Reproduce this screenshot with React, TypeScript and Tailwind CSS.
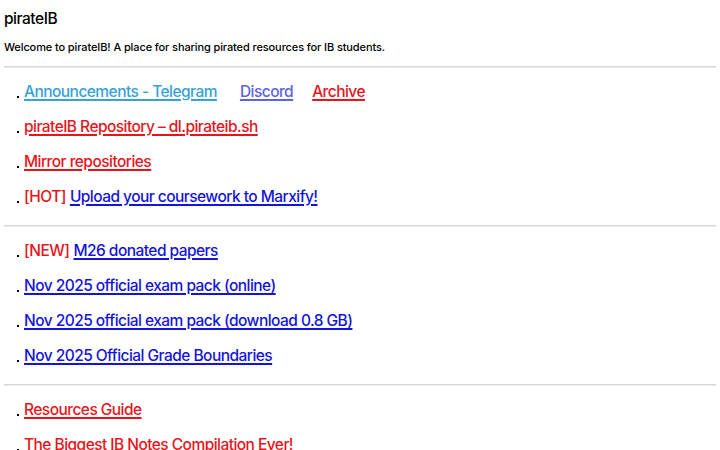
import React from 'react';

type Part = { text: string; href?: string; color: string };

const red = 'text-[#e8141b]';
const blue = 'text-[#1414dc]';

const groups: Part[][][] = [
    [
        [
            { text: 'Announcements - Telegram', href: '#', color: 'text-[#35a2d8]' },
            { text: 'Discord', href: '#', color: 'text-[#5d63e2] ml-[23px]' },
            { text: 'Archive', href: '#', color: `${red} ml-[19px]` },
        ],
        [{ text: 'pirateIB Repository – dl.pirateib.sh', href: '#', color: red }],
        [{ text: 'Mirror repositories', href: '#', color: red }],
        [
            { text: '[HOT]', color: red },
            { text: 'Upload your coursework to Marxify!', href: '#', color: blue },
        ],
    ],
    [
        [
            { text: '[NEW]', color: red },
            { text: 'M26 donated papers', href: '#', color: blue },
        ],
        [{ text: 'Nov 2025 official exam pack (online)', href: '#', color: blue }],
        [{ text: 'Nov 2025 official exam pack (download 0.8 GB)', href: '#', color: blue }],
        [{ text: 'Nov 2025 Official Grade Boundaries', href: '#', color: blue }],
    ],
    [
        [{ text: 'Resources Guide', href: '#', color: red }],
        [{ text: 'The Biggest IB Notes Compilation Ever!', href: '#', color: red }],
    ],
];

const Rule = () => <hr className="border-0 h-[2px] bg-[#d6d6d6] border-b border-b-[#ececec]" />;

export default function App() {
    return (
        <div className="min-h-screen bg-white px-1 text-black font-['Inter','Liberation_Sans',sans-serif]">
            <h1 className="pt-[9px] text-[15.5px] leading-[20px] font-medium tracking-[-0.03em]">pirateIB</h1>
            <p className="mt-[11px] text-[11px] leading-[14px] font-medium tracking-[-0.01em]">
                Welcome to pirateIB! A place for sharing pirated resources for IB students.
            </p>
            {groups.map((rows, gi) => (
                <div key={gi}>
                    <div className={gi === 0 ? 'mt-[12px]' : ''}>
                        <Rule />
                    </div>
                    <ul className="pt-[6px] pb-[11px]">
                        {rows.map((parts, ri) => (
                            <li key={ri} className="h-[35px] flex items-center pl-[13px] text-[15.5px] font-medium tracking-[-0.035em]">
                                <span className="w-[2px] h-[2px] bg-black mt-[10px] mr-[5px] shrink-0" />
                                {parts.map((p, pi) =>
                                    p.href ? (
                                        <a
                                            key={pi}
                                            href={p.href}
                                            className={`${p.color} ${pi > 0 && !p.color.includes('ml-') ? 'ml-[4px]' : ''} underline underline-offset-[2px] decoration-[1.5px] whitespace-nowrap`}
                                        >
                                            {p.text}
                                        </a>
                                    ) : (
                                        <span key={pi} className={`${p.color} whitespace-nowrap`}>
                                            {p.text}
                                        </span>
                                    ),
                                )}
                            </li>
                        ))}
                    </ul>
                </div>
            ))}
        </div>
    );
}
